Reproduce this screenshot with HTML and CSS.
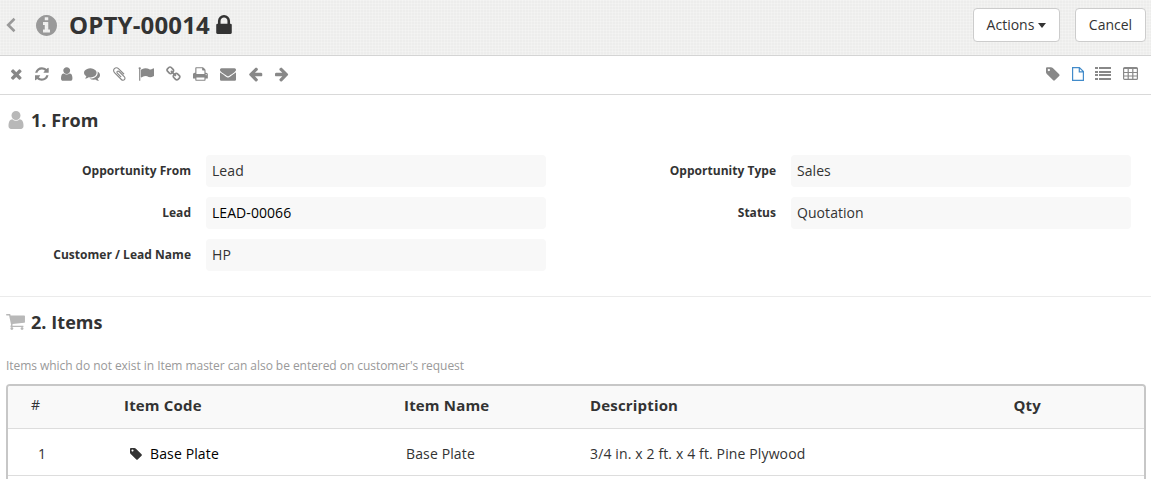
FILE: index.html
```
<!DOCTYPE html>
<html lang="en">
<head>
<meta charset="utf-8">
<title>OPTY-00014</title>
<link rel="stylesheet" href="styles.css">
</head>
<body>
<header class="page-head">
  <svg class="back" viewBox="0 0 10 16"><path d="M8.5 1.8 2.2 8l6.3 6.2"/></svg>
  <svg class="info" viewBox="128 128 1536 1536"><path d="M1152 1376v-160q0-14-9-23t-23-9h-96v-512q0-14-9-23t-23-9h-320q-14 0-23 9t-9 23v160q0 14 9 23t23 9h96v320h-96q-14 0-23 9t-9 23v160q0 14 9 23t23 9h448q14 0 23-9t9-23zm-128-896v-160q0-14-9-23t-23-9h-192q-14 0-23 9t-9 23v160q0 14 9 23t23 9h192q14 0 23-9t9-23zm640 416q0 209-103 385.5t-279.5 279.5-385.5 103-385.5-103-279.5-279.5-103-385.5 103-385.5 279.5-279.5 385.5-103 385.5 103 279.5 279.5 103 385.5z"/></svg>
  <h1 class="title">OPTY-00014</h1>
  <svg class="lock" viewBox="320 128 1152 1408"><path d="M640 768h512v-192q0-106-75-181t-181-75-181 75-75 181v192zm832 96v576q0 40-28 68t-68 28h-960q-40 0-68-28t-28-68v-576q0-40 28-68t68-28h32v-192q0-184 132-316t316-132 316 132 132 316v192h32q40 0 68 28t28 68z"/></svg>
  <div class="head-actions">
    <button class="btn btn-actions">Actions<span class="caret"></span></button>
    <button class="btn btn-cancel">Cancel</button>
  </div>
</header>

<nav class="toolbar">
  <div class="tools">
    <svg class="icon" viewBox="192 0 1408 1792"><path d="M1490 1322q0 40-28 68l-136 136q-28 28-68 28t-68-28l-294-294-294 294q-28 28-68 28t-68-28l-136-136q-28-28-28-68t28-68l294-294-294-294q-28-28-28-68t28-68l136-136q28-28 68-28t68 28l294 294 294-294q28-28 68-28t68 28l136 136q28 28 28 68t-28 68l-294 294 294 294q28 28 28 68z"/></svg>
    <svg class="icon" viewBox="128 0 1536 1792"><path d="M1639 1056q0 5-1 7-64 268-268 434.5t-478 166.5q-146 0-282.5-55t-243.5-157l-129 129q-19 19-45 19t-45-19-19-45v-448q0-26 19-45t45-19h448q26 0 45 19t19 45-19 45l-137 137q71 66 161 102t187 36q134 0 250-65t186-179q11-17 53-117 8-23 30-23h192q13 0 22.5 9.5t9.5 22.5zm25-800v448q0 26-19 45t-45 19h-448q-26 0-45-19t-19-45 19-45l138-138q-148-137-349-137-134 0-250 65t-186 179q-11 17-53 117-8 23-30 23h-199q-13 0-22.5-9.5t-9.5-22.5v-7q65-268 270-434.5t480-166.5q146 0 284 55.5t245 156.5l130-129q19-19 45-19t45 19 19 45z"/></svg>
    <svg class="icon" viewBox="256 0 1280 1792"><path d="M1536 1399q0 109-62.5 187t-150.5 78h-854q-88 0-150.5-78t-62.5-187q0-85 8.5-160.5t31.5-152 58.5-131 94-89 134.5-34.5q131 128 313 128t313-128q76 0 134.5 34.5t94 89 58.5 131 31.5 152 8.5 160.5zm-256-887q0 159-112.5 271.5t-271.5 112.5-271.5-112.5-112.5-271.5 112.5-271.5 271.5-112.5 271.5 112.5 112.5 271.5z"/></svg>
    <svg class="icon" viewBox="0 0 1792 1792"><path d="M1408 768q0 139-94 257t-256.5 186.5-353.5 68.5q-86 0-176-16-124 88-278 128-36 9-86 16h-3q-11 0-20.5-8t-11.5-21q-1-3-1-6.5t.5-6.5 2-6l2.5-5 3.5-5.5 4-5 4.5-5 4-4.5q5-6 23-25t26-29.5 22.5-29 25-38.5 20.5-44q-124-72-195-177t-71-224q0-139 94-257t256.5-186.5 353.5-68.5 353.5 68.5 256.5 186.5 94 257zm384 256q0 120-71 224.5t-195 176.5q10 24 20.5 44t25 38.5 22.5 29 26 29.5 23 25q1 1 4 4.5t4.5 5 4 5 3.5 5.5l2.5 5 2 6 .5 6.5-1 6.5q-3 14-13 22t-22 7q-50-7-86-16-154-40-278-128-90 16-176 16-271 0-472-132 58 4 88 4 161 0 309-45t264-129q125-92 192-212t67-254q0-77-23-152 129 71 204 178t75 230z"/></svg>
    <svg class="icon" viewBox="192 0 1408 1792"><path d="M1596 1385q0 117-79 196t-196 79q-135 0-235-100l-777-776q-113-115-113-271 0-159 110-270t269-111q158 0 273 113l605 606q10 10 10 22 0 16-30.5 46.5t-46.5 30.5q-13 0-23-10l-606-607q-79-77-181-77-106 0-179 75t-73 181q0 105 76 181l776 777q63 63 145 63 64 0 106-42t42-106q0-82-63-145l-581-581q-26-24-60-24-29 0-48 19t-19 48q0 32 25 59l410 410q10 10 10 22 0 16-31 47t-47 31q-12 0-22-10l-410-410q-63-61-63-149 0-82 57-139t139-57q88 0 149 63l581 581q100 98 100 235z"/></svg>
    <svg class="icon" viewBox="0 0 1792 1792"><path d="M320 256q0 72-64 110v1266q0 13-9.5 22.5t-22.5 9.5h-64q-13 0-22.5-9.5t-9.5-22.5v-1266q-64-38-64-110 0-53 37.5-90.5t90.5-37.5 90.5 37.5 37.5 90.5zm1472 64v763q0 25-12.5 38.5t-39.5 27.5q-215 116-369 116-61 0-123.5-22t-108.5-48-115.5-48-142.5-22q-192 0-464 146-17 9-33 9-26 0-45-19t-19-45v-742q0-32 31-55 21-14 79-43 236-120 421-120 107 0 200 29t219 88q38 19 88 19 54 0 117.5-21t110-47 88-47 54.5-21q26 0 45 19t19 45z"/></svg>
    <svg class="icon" viewBox="64 0 1664 1792"><path d="M1520 1216q0-40-28-68l-208-208q-28-28-68-28-42 0-72 32 3 3 19 18.5t21.5 21.5 15 19 13 25.5 3.5 27.5q0 40-28 68t-68 28q-15 0-27.5-3.5t-25.5-13-19-15-21.5-21.5-18.5-19q-33 31-33 73 0 40 28 68l206 207q27 27 68 27 40 0 68-26l147-146q28-28 28-67zm-703-705q0-40-28-68l-206-207q-28-28-68-28-39 0-68 27l-147 146q-28 28-28 67 0 40 28 68l208 208q27 27 68 27 42 0 72-31-3-3-19-18.5t-21.5-21.5-15-19-13-25.5-3.5-27.5q0-40 28-68t68-28q15 0 27.5 3.5t25.5 13 19 15 21.5 21.5 18.5 19q33-31 33-73zm895 705q0 120-85 203l-147 146q-83 83-203 83-121 0-204-85l-206-207q-83-83-83-203 0-123 88-209l-88-88q-86 88-208 88-120 0-204-84l-208-208q-84-84-84-204t85-203l147-146q83-83 203-83 121 0 204 85l206 207q83 83 83 203 0 123-88 209l88 88q86-88 208-88 120 0 204 84l208 208q84 84 84 204z"/></svg>
    <svg class="icon" viewBox="64 0 1664 1792"><path d="M448 1536h896v-256h-896v256zm0-640h896v-384h-160q-40 0-68-28t-28-68v-160h-640v640zm1152 64q0-26-19-45t-45-19-45 19-19 45 19 45 45 19 45-19 19-45zm128 0v416q0 13-9.5 22.5t-22.5 9.5h-224v160q0 40-28 68t-68 28h-960q-40 0-68-28t-28-68v-160h-224q-13 0-22.5-9.5t-9.5-22.5v-416q0-79 56.5-135.5t135.5-56.5h64v-544q0-40 28-68t68-28h672q40 0 88 20t76 48l152 152q28 28 48 76t20 88v256h64q79 0 135.5 56.5t56.5 135.5z"/></svg>
    <svg class="icon" viewBox="0 0 1792 1792"><path d="M1792 710v794q0 66-47 113t-113 47h-1472q-66 0-113-47t-47-113v-794q44 49 101 87 362 246 497 345 57 42 92.5 65.5t94.5 48 110 24.5h2q51 0 110-24.5t94.5-48 92.5-65.5q170-123 498-345 57-39 100-87zm0-294q0 79-49 151t-122 123q-376 261-468 325-10 7-42.5 30.5t-54 38-52 32.5-57.5 27-50 9h-2q-23 0-50-9t-57.5-27-52-32.5-54-38-42.5-30.5q-91-64-262-182.5t-205-142.5q-62-42-117-115.5t-55-136.5q0-78 41.5-130t118.5-52h1472q65 0 112.5 47t47.5 113z"/></svg>
    <svg class="icon" viewBox="64 0 1664 1792"><path d="M1664 896v128q0 53-32.5 90.5t-84.5 37.5h-704l293 294q38 36 38 90t-38 90l-75 76q-37 37-90 37-52 0-91-37l-651-652q-37-37-37-90 0-52 37-91l651-650q38-38 91-38 52 0 90 38l75 74q38 38 38 91t-38 91l-293 293h704q52 0 84.5 37.5t32.5 90.5z"/></svg>
    <svg class="icon" viewBox="128 0 1536 1792"><path transform="matrix(-1 0 0 1 1792 0)" d="M1664 896v128q0 53-32.5 90.5t-84.5 37.5h-704l293 294q38 36 38 90t-38 90l-75 76q-37 37-90 37-52 0-91-37l-651-652q-37-37-37-90 0-52 37-91l651-650q38-38 91-38 52 0 90 38l75 74q38 38 38 91t-38 91l-293 293h704q52 0 84.5 37.5t32.5 90.5z"/></svg>
  </div>
  <div class="views">
    <svg class="icon" viewBox="128 0 1536 1792"><path d="M576 448q0-53-37.5-90.5t-90.5-37.5-90.5 37.5-37.5 90.5 37.5 90.5 90.5 37.5 90.5-37.5 37.5-90.5zm1067 576q0 53-37 90l-491 492q-39 37-91 37-53 0-90-37l-715-716q-38-37-64.5-101t-26.5-117v-416q0-52 38-90t90-38h416q53 0 117 26.5t102 64.5l715 714q37 39 37 91z"/></svg>
    <svg class="file" viewBox="0 0 12 14"><path d="M.6.6h6.8l4 4v8.800H.6zM7.300.8v4h4"/></svg>
    <svg class="list" viewBox="0 0 16 13"><path d="M0 0h3v2H0zM4 0h12v2H4zM0 4h3v2H0zM4 4h12v2H4zM0 7h3v2H0zM4 7h12v2H4zM0 11h3v2H0zM4 11h12v2H4z"/></svg>
    <svg class="grid" viewBox="0 0 15 13"><rect x=".6" y=".6" width="13.8" height="11.8" rx="1"/><path d="M.5 1.500h14M.5 5.500h14M.5 9h14M5.200 1v11.500M9.800 1v11.500"/></svg>
  </div>
</nav>

<section class="section">
  <h2 class="section-title">
    <svg class="section-icon user" viewBox="256 128 1280 1536"><path d="M1536 1399q0 109-62.5 187t-150.5 78h-854q-88 0-150.5-78t-62.5-187q0-85 8.5-160.5t31.5-152 58.5-131 94-89 134.5-34.5q131 128 313 128t313-128q76 0 134.5 34.5t94 89 58.5 131 31.5 152 8.5 160.5zm-256-887q0 159-112.5 271.5t-271.5 112.5-271.5-112.5-112.5-271.5 112.5-271.5 271.5-112.5 271.5 112.5 112.5 271.5z"/></svg>
    1. From
  </h2>
  <div class="fields">
    <div class="column">
      <div class="field"><span class="label">Opportunity From</span><span class="value">Lead</span></div>
      <div class="field"><span class="label">Lead</span><a class="value link">LEAD-00066</a></div>
      <div class="field"><span class="label">Customer / Lead Name</span><span class="value">HP</span></div>
    </div>
    <div class="column">
      <div class="field"><span class="label">Opportunity Type</span><span class="value">Sales</span></div>
      <div class="field"><span class="label">Status</span><span class="value">Quotation</span></div>
    </div>
  </div>
</section>

<section class="section items">
  <h2 class="section-title">
    <svg class="section-icon cart" viewBox="64 256 1664 1408"><path d="M704 1536q0 52-38 90t-90 38-90-38-38-90 38-90 90-38 90 38 38 90zm896 0q0 52-38 90t-90 38-90-38-38-90 38-90 90-38 90 38 38 90zm128-1088v512q0 24-16.5 42.5t-40.5 21.5l-1044 122q13 60 13 70 0 16-24 64h920q26 0 45 19t19 45-19 45-45 19h-1024q-26 0-45-19t-19-45q0-11 8-31.5t16-36 21.5-40 15.5-29.5l-177-823h-204q-26 0-45-19t-19-45 19-45 45-19h256q16 0 28.5 6.5t19.5 15.5 13 24.5 8 26 5.5 29.5 4.5 26h1201q26 0 45 19t19 45z"/></svg>
    2. Items
  </h2>
  <p class="hint">Items which do not exist in Item master can also be entered on customer's request</p>
  <div class="table">
    <div class="row head">
      <span class="idx">#</span><span>Item Code</span><span>Item Name</span><span>Description</span><span class="qty">Qty</span>
    </div>
    <div class="row">
      <span class="num">1</span>
      <a class="code"><svg class="tag" viewBox="128 128 1536 1536"><path d="M576 448q0-53-37.5-90.5t-90.5-37.5-90.5 37.5-37.5 90.5 37.5 90.5 90.5 37.5 90.5-37.5 37.5-90.5zm1067 576q0 53-37 90l-491 492q-39 37-91 37-53 0-90-37l-715-716q-38-37-64.5-101t-26.5-117v-416q0-52 38-90t90-38h416q53 0 117 26.5t102 64.5l715 714q37 39 37 91z"/></svg>Base Plate</a>
      <span class="name">Base Plate</span><span>3/4 in. x 2 ft. x 4 ft. Pine Plywood</span><span></span>
    </div>
  </div>
</section>
</body>
</html>
```
FILE: styles.css
```
* { box-sizing: border-box; }
body {
  margin: 0;
  background: #fff;
  color: #333;
  font: 14px/20px "Open Sans", "Noto Sans", sans-serif;
}
h1, h2, p { margin: 0; }
svg { display: block; flex: none; fill: currentColor; overflow: visible; }

.page-head {
  display: flex;
  align-items: center;
  height: 56px;
  padding: 0 5px 5px 6px;
  border-bottom: 1px solid #d4d4d4;
  background:
    repeating-linear-gradient(90deg, rgba(255,255,255,.22) 0 1px, transparent 1px 3px),
    repeating-linear-gradient(0deg, rgba(255,255,255,.22) 0 1px, transparent 1px 3px),
    #ededec;
}
.back { width: 10px; height: 16px; fill: none; stroke: #999; stroke-width: 2.6; }
.info { width: 21px; height: 21px; margin-left: 20px; color: #999; }
.title { margin-left: 12px; font-size: 24px; line-height: 30px; font-weight: 700; letter-spacing: .15px; }
.lock { width: 16px; height: 19px; margin: 0 0 2px 6px; }
.head-actions { display: flex; gap: 15px; margin-left: auto; }
.btn {
  display: flex;
  align-items: center;
  justify-content: center;
  height: 34px;
  padding: 0;
  border: 1px solid #ccc;
  border-radius: 4px;
  background: #fff;
  color: #333;
  font: inherit;
}
.btn-actions { width: 87px; }
.btn-cancel { width: 71px; }
.caret { margin-left: 4px; border: 4.5px solid transparent; border-width: 5px 4px 0; border-top-color: #333; }

.toolbar {
  display: flex;
  align-items: center;
  justify-content: space-between;
  height: 39px;
  padding: 0 13px 2px 10px;
  border-bottom: 1px solid #d9d9d9;
  color: #888;
}
.tools { display: flex; gap: 12.25px; }
.icon { height: 16px; }
.views { display: flex; align-items: center; }
.file { width: 12px; height: 14px; margin-left: 12px; fill: none; stroke: #428bca; stroke-width: 1.2; }
.list { width: 16px; height: 13px; margin: 0 0 1px 11px; }
.grid { width: 15px; height: 13px; margin: 0 0 1px 12px; fill: none; stroke: #888; stroke-width: 1.2; }

.section { height: 202px; padding: 15px 5px 0 6px; border-bottom: 1px solid #ebebeb; }
.section-title { display: flex; align-items: center; height: 20px; font-size: 18px; font-weight: 700; letter-spacing: .06px; }
.section-icon { color: #b8b8b8; }
.user { width: 16px; height: 18px; margin: 0 7px 0 2px; }
.cart { width: 19px; height: 16px; margin-right: 6px; }

.fields { display: grid; grid-template-columns: 585px 540px; margin-top: 25px; }
.column { display: flex; flex-direction: column; gap: 10px; }
.field { display: grid; grid-template-columns: 185px 340px; gap: 15px; height: 32px; align-items: center; }
.label { text-align: right; font-size: 12px; font-weight: 700; letter-spacing: .02px; }
.value { height: 32px; padding: 6px; border-radius: 4px; background: #f8f8f8; letter-spacing: .06px; }
.link, .code { color: #000; }

.items { height: 182px; padding-top: 15px; border: 0; }
.hint { margin-top: 24px; color: #999; font-size: 12px; letter-spacing: -.05px; }
.table {
  height: 95px;
  margin-top: 8px;
  border: 2px solid #c7c7c7;
  border-bottom: 0;
  border-radius: 4px 4px 0 0;
  overflow: hidden;
}
.row {
  display: grid;
  grid-template-columns: 93px 280px 186px 308px 1fr;
  align-items: center;
  height: 47px;
  padding: 3px 15px 0 23px;
  border-bottom: 1px solid #ddd;
  letter-spacing: .13px;
}
.head { height: 43px; padding-top: 0; padding-bottom: 5px; background: #f9f9f9; font-size: 15px; font-weight: 700; letter-spacing: .17px; }
.idx { font-size: 14px; font-weight: 400; }
.qty { width: 143px; text-align: right; }
.num { padding-left: 7px; }
.code { display: flex; align-items: center; gap: 8px; padding-left: 6px; }
.tag { width: 12px; height: 12px; color: #333; }
.name { padding-left: 2px; }
```
